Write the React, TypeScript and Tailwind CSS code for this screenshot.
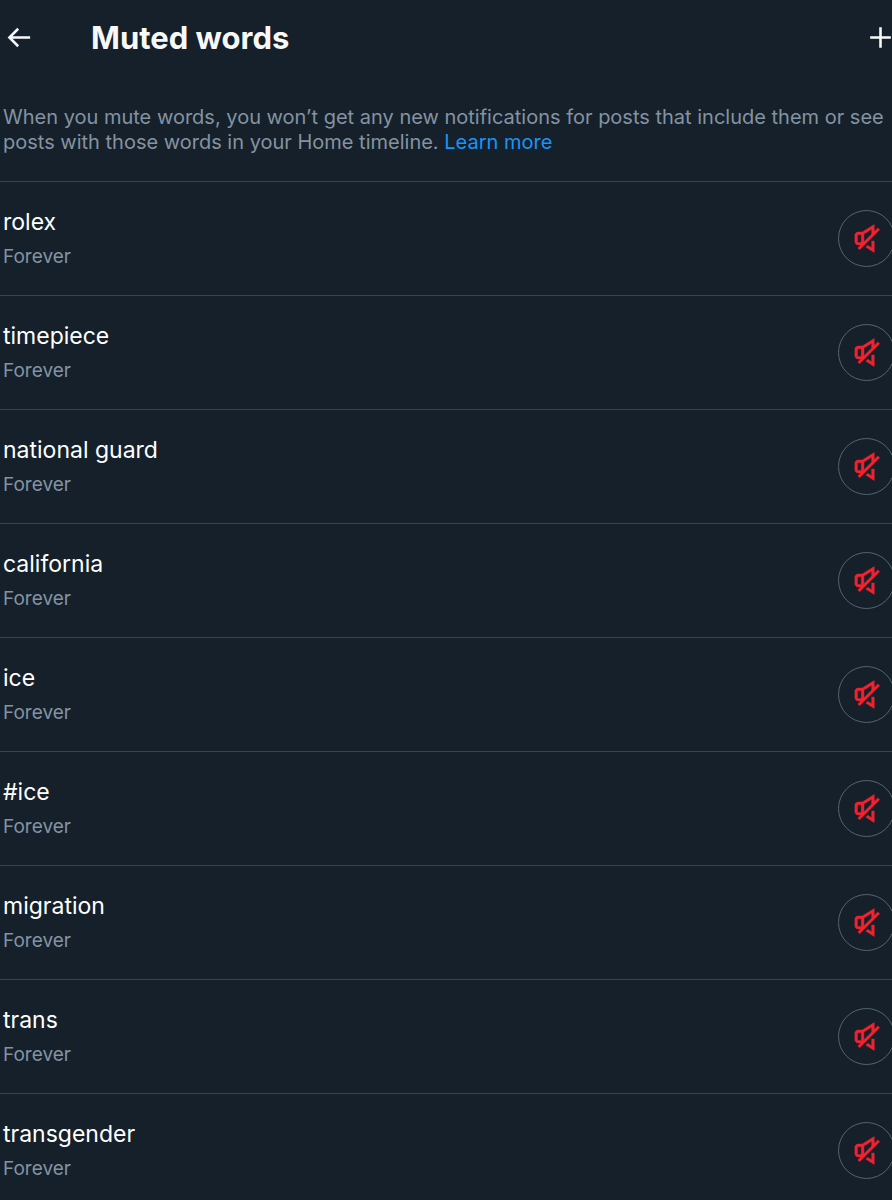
const words: string[] = [
  "rolex",
  "timepiece",
  "national guard",
  "california",
  "ice",
  "#ice",
  "migration",
  "trans",
  "transgender",
];

function Icon({ d, heavy = false }: { d: string; heavy?: boolean }) {
  return (
    <svg viewBox="0 0 24 24" className="size-[31px] shrink-0 fill-current" aria-hidden="true">
      <path d={d} stroke={heavy ? "currentColor" : "none"} strokeWidth={0.35} />
    </svg>
  );
}

const BACK =
  "M7.414 13l5.043 5.04-1.414 1.42L3.586 12l7.457-7.46 1.414 1.42L7.414 11H21v2H7.414z";
const PLUS = "M11 11V4h2v7h7v2h-7v7h-2v-7H4v-2h7z";
const MUTED =
  "M18 6.59V1.2L8.71 7H5.5C4.12 7 3 8.12 3 9.5v5C3 15.88 4.12 17 5.5 17h2.09l-2.3 2.29 1.42 1.42 15.5-15.5-1.42-1.42L18 6.59zm-8 8V8.55l6-3.75v3.79l-6 6zM5 9.5c0-.28.22-.5.5-.5H8v6H5.5c-.28 0-.5-.22-.5-.5v-5zm6.5 9.24l1.45-1.45L16 19.2V14l2 .02v8.78l-6.5-4.06z";

function WordRow({ word }: { word: string }) {
  return (
    <li className="flex h-[114px] items-center justify-between border-t border-[#38444d] pl-[3px]">
      <div className="flex flex-col gap-1.5">
        <span className="text-[23px] leading-[30px] text-white">{word}</span>
        <span className="text-[19px] leading-[28px] text-[#8493a1]">Forever</span>
      </div>
      <button
        type="button"
        aria-label={`Unmute ${word}`}
        className="-mr-[3px] flex size-[57px] shrink-0 items-center justify-center rounded-full border border-[#536471] text-[#f4212e]"
      >
        <Icon d={MUTED} heavy />
      </button>
    </li>
  );
}

export default function App() {
  return (
    <main className="min-h-screen overflow-hidden bg-[#15202b] font-['Inter','Noto_Sans',sans-serif]">
      <header className="flex h-[75px] items-center px-[3px] text-[#f7f9f9]">
        <button type="button" aria-label="Back">
          <Icon d={BACK} />
        </button>
        <h1 className="ml-[57px] flex-1 text-[31px] leading-[38px] font-bold">Muted words</h1>
        <button type="button" aria-label="Add muted word" className="-mr-[7px]">
          <Icon d={PLUS} />
        </button>
      </header>
      <p className="px-[3px] pt-[30px] pb-[26px] text-[20px] leading-[25px] text-[#8493a1]">
        When you mute words, you won’t get any new notifications for posts that include them or see
        posts with those words in your Home timeline.{" "}
        <a href="#learn-more" className="text-[#1a94f8]">
          Learn more
        </a>
      </p>
      <ul className="-mb-4">
        {words.map((word) => (
          <WordRow key={word} word={word} />
        ))}
      </ul>
    </main>
  );
}
